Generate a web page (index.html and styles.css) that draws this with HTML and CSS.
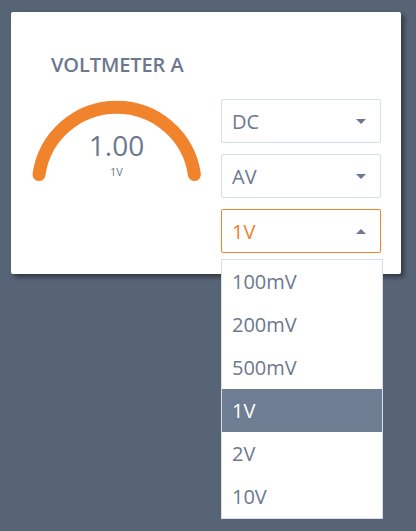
FILE: index.html
```html
<!DOCTYPE html>
<html>
<head>
<meta charset="utf-8">
<link rel="stylesheet" href="styles.css">
</head>
<body>
<div class="card">
  <div class="title">VOLTMETER A</div>
  <div class="row">
    <div class="gauge">
      <svg class="arc" width="172" height="90" viewBox="0 0 172 90">
        <path d="M 9.0 74.5 A 78.5 78.5 0 0 1 164.4 74.5" fill="none" stroke="#f0832c" stroke-width="13" stroke-linecap="round"/>
      </svg>
      <div class="value">1.00</div>
      <div class="unit">1V</div>
    </div>
    <div class="selects">
      <div class="select"><span>DC</span><span class="caret down"></span></div>
      <div class="select"><span>AV</span><span class="caret down"></span></div>
      <div class="select open"><span>1V</span><span class="caret up"></span>
        <ul class="menu">
          <li>100mV</li>
          <li>200mV</li>
          <li>500mV</li>
          <li class="active">1V</li>
          <li>2V</li>
          <li>10V</li>
        </ul>
      </div>
    </div>
  </div>
</div>
</body>
</html>
```
FILE: styles.css
```css
html, body {
  margin: 0;
  padding: 0;
}
body {
  background: #576475;
  font-family: "Open Sans", "Noto Sans", sans-serif;
  color: #6b788e;
  width: 416px;
  height: 531px;
  overflow: hidden;
}
.card {
  margin: 12px 0 0 11px;
  width: 390px;
  height: 262px;
  box-sizing: border-box;
  background: #fff;
  border-radius: 2px;
  box-shadow: 3px 3px 5px rgba(0, 0, 0, 0.45);
  padding: 39px 20px 0 20px;
}
.title {
  font-size: 20px;
  font-weight: 600;
  line-height: 28px;
  padding-left: 20px;
  letter-spacing: -0.1px;
}
.row {
  display: flex;
  justify-content: space-between;
  margin-top: 20px;
}
.gauge {
  position: relative;
  width: 172px;
  height: 90px;
  margin-top: 1px;
  margin-left: -1px;
}
.arc {
  position: absolute;
  left: 0;
  top: 0;
}
.value {
  position: relative;
  text-align: center;
  font-size: 28px;
  line-height: 38px;
  padding-top: 26px;
  padding-left: 1px;
}
.unit {
  position: relative;
  text-align: center;
  font-size: 11px;
  line-height: 14px;
  margin-top: 1px;
  padding-left: 1px;
}
.selects {
  display: flex;
  flex-direction: column;
  gap: 11px;
  width: 160px;
}
.select {
  position: relative;
  height: 44px;
  box-sizing: border-box;
  border: 1px solid #d6dee9;
  border-radius: 2px;
  display: flex;
  align-items: center;
  justify-content: space-between;
  padding: 0 14px 0 10px;
  font-size: 20px;
}
.select.open {
  border-color: #f0832c;
  color: #f0832c;
}
.caret {
  width: 0;
  height: 0;
  border-left: 5px solid transparent;
  border-right: 5px solid transparent;
}
.caret.down {
  border-top: 5px solid #6b788e;
}
.caret.up {
  border-bottom: 5px solid #6b788e;
}
.menu {
  position: absolute;
  left: -1px;
  top: 49px;
  width: 162px;
  box-sizing: border-box;
  margin: 0;
  padding: 0;
  list-style: none;
  background: #fff;
  border: 1px solid #d6dee9;
  color: #6b788e;
  z-index: 2;
}
.menu li {
  height: 43px;
  line-height: 43px;
  padding-left: 10px;
  font-size: 20px;
}
.menu li.active {
  background: #6f7d93;
  color: #fff;
}
```
